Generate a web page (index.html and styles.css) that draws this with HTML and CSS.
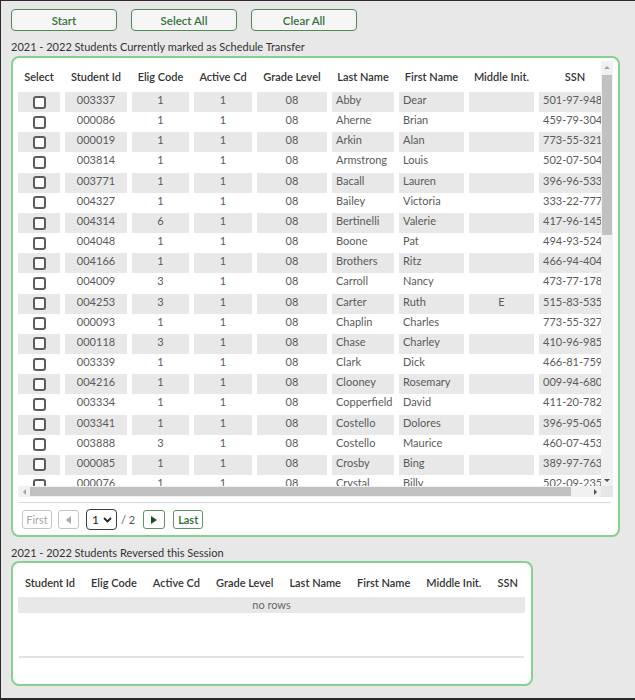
FILE: index.html
```html
<!DOCTYPE html>
<html>
<head>
<meta charset="utf-8">
<link rel="stylesheet" href="styles.css">
</head>
<body>
<div class="frame">
  <div class="actions">
    <button class="btn">Start</button>
    <button class="btn">Select All</button>
    <button class="btn">Clear All</button>
  </div>

  <div class="section-title">2021 - 2022 Students Currently marked as Schedule Transfer</div>
  <div class="panel panel-main">
    <div class="scroller">
      <div class="viewport">
        <div class="row head">
          <span class="h">Select</span><span class="h">Student Id</span><span class="h">Elig Code</span><span class="h">Active Cd</span><span class="h">Grade Level</span><span class="h">Last Name</span><span class="h">First Name</span><span class="h">Middle Init.</span><span class="h">SSN</span>
        </div>
        <div class="row alt"><span class="c ck"><span class="cb"></span></span><span class="c">003337</span><span class="c">1</span><span class="c">1</span><span class="c">08</span><span class="c l">Abby</span><span class="c l">Dear</span><span class="c"></span><span class="c l">501-97-9481</span></div>
        <div class="row"><span class="c ck"><span class="cb"></span></span><span class="c">000086</span><span class="c">1</span><span class="c">1</span><span class="c">08</span><span class="c l">Aherne</span><span class="c l">Brian</span><span class="c"></span><span class="c l">459-79-3042</span></div>
        <div class="row alt"><span class="c ck"><span class="cb"></span></span><span class="c">000019</span><span class="c">1</span><span class="c">1</span><span class="c">08</span><span class="c l">Arkin</span><span class="c l">Alan</span><span class="c"></span><span class="c l">773-55-3217</span></div>
        <div class="row"><span class="c ck"><span class="cb"></span></span><span class="c">003814</span><span class="c">1</span><span class="c">1</span><span class="c">08</span><span class="c l">Armstrong</span><span class="c l">Louis</span><span class="c"></span><span class="c l">502-07-5043</span></div>
        <div class="row alt"><span class="c ck"><span class="cb"></span></span><span class="c">003771</span><span class="c">1</span><span class="c">1</span><span class="c">08</span><span class="c l">Bacall</span><span class="c l">Lauren</span><span class="c"></span><span class="c l">396-96-5331</span></div>
        <div class="row"><span class="c ck"><span class="cb"></span></span><span class="c">004327</span><span class="c">1</span><span class="c">1</span><span class="c">08</span><span class="c l">Bailey</span><span class="c l">Victoria</span><span class="c"></span><span class="c l">333-22-7770</span></div>
        <div class="row alt"><span class="c ck"><span class="cb"></span></span><span class="c">004314</span><span class="c">6</span><span class="c">1</span><span class="c">08</span><span class="c l">Bertinelli</span><span class="c l">Valerie</span><span class="c"></span><span class="c l">417-96-1456</span></div>
        <div class="row"><span class="c ck"><span class="cb"></span></span><span class="c">004048</span><span class="c">1</span><span class="c">1</span><span class="c">08</span><span class="c l">Boone</span><span class="c l">Pat</span><span class="c"></span><span class="c l">494-93-5248</span></div>
        <div class="row alt"><span class="c ck"><span class="cb"></span></span><span class="c">004166</span><span class="c">1</span><span class="c">1</span><span class="c">08</span><span class="c l">Brothers</span><span class="c l">Ritz</span><span class="c"></span><span class="c l">466-94-4047</span></div>
        <div class="row"><span class="c ck"><span class="cb"></span></span><span class="c">004009</span><span class="c">3</span><span class="c">1</span><span class="c">08</span><span class="c l">Carroll</span><span class="c l">Nancy</span><span class="c"></span><span class="c l">473-77-1789</span></div>
        <div class="row alt"><span class="c ck"><span class="cb"></span></span><span class="c">004253</span><span class="c">3</span><span class="c">1</span><span class="c">08</span><span class="c l">Carter</span><span class="c l">Ruth</span><span class="c">E</span><span class="c l">515-83-5356</span></div>
        <div class="row"><span class="c ck"><span class="cb"></span></span><span class="c">000093</span><span class="c">1</span><span class="c">1</span><span class="c">08</span><span class="c l">Chaplin</span><span class="c l">Charles</span><span class="c"></span><span class="c l">773-55-3274</span></div>
        <div class="row alt"><span class="c ck"><span class="cb"></span></span><span class="c">000118</span><span class="c">3</span><span class="c">1</span><span class="c">08</span><span class="c l">Chase</span><span class="c l">Charley</span><span class="c"></span><span class="c l">410-96-9857</span></div>
        <div class="row"><span class="c ck"><span class="cb"></span></span><span class="c">003339</span><span class="c">1</span><span class="c">1</span><span class="c">08</span><span class="c l">Clark</span><span class="c l">Dick</span><span class="c"></span><span class="c l">466-81-7591</span></div>
        <div class="row alt"><span class="c ck"><span class="cb"></span></span><span class="c">004216</span><span class="c">1</span><span class="c">1</span><span class="c">08</span><span class="c l">Clooney</span><span class="c l">Rosemary</span><span class="c"></span><span class="c l">009-94-6801</span></div>
        <div class="row"><span class="c ck"><span class="cb"></span></span><span class="c">003334</span><span class="c">1</span><span class="c">1</span><span class="c">08</span><span class="c l">Copperfield</span><span class="c l">David</span><span class="c"></span><span class="c l">411-20-7823</span></div>
        <div class="row alt"><span class="c ck"><span class="cb"></span></span><span class="c">003341</span><span class="c">1</span><span class="c">1</span><span class="c">08</span><span class="c l">Costello</span><span class="c l">Dolores</span><span class="c"></span><span class="c l">396-95-0654</span></div>
        <div class="row"><span class="c ck"><span class="cb"></span></span><span class="c">003888</span><span class="c">3</span><span class="c">1</span><span class="c">08</span><span class="c l">Costello</span><span class="c l">Maurice</span><span class="c"></span><span class="c l">460-07-4532</span></div>
        <div class="row alt"><span class="c ck"><span class="cb"></span></span><span class="c">000085</span><span class="c">1</span><span class="c">1</span><span class="c">08</span><span class="c l">Crosby</span><span class="c l">Bing</span><span class="c"></span><span class="c l">389-97-7635</span></div>
        <div class="row"><span class="c ck"><span class="cb"></span></span><span class="c">000076</span><span class="c">1</span><span class="c">1</span><span class="c">08</span><span class="c l">Crystal</span><span class="c l">Billy</span><span class="c"></span><span class="c l">502-09-2357</span></div>
      </div>
      <div class="vscroll">
        <span class="arrow-box"><span class="tri-up dim"></span></span>
        <span class="vtrack"><span class="vthumb"></span></span>
        <span class="arrow-box"><span class="tri-down"></span></span>
      </div>
      <div class="hscroll">
        <span class="arrow-box"><span class="tri-left dim"></span></span>
        <span class="htrack"><span class="hthumb"></span></span>
        <span class="arrow-box"><span class="tri-right"></span></span>
      </div>
      <div class="corner"></div>
    </div>
    <div class="divider"></div>
    <div class="pager">
      <span class="pbtn disabled first">First</span>
      <span class="pbtn disabled icon"><span class="ptri-left"></span></span>
      <span class="pselect">1<svg class="chev" width="9" height="6" viewBox="0 0 9 6"><path d="M1 1 L4.5 4.5 L8 1" fill="none" stroke="#222" stroke-width="1.8"/></svg></span>
      <span class="ptotal">/ 2</span>
      <span class="pbtn active icon"><span class="ptri-right"></span></span>
      <span class="pbtn active last">Last</span>
    </div>
  </div>

  <div class="section-title second">2021 - 2022 Students Reversed this Session</div>
  <div class="panel panel-rev">
    <div class="rev-head">
      <span>Student Id</span><span>Elig Code</span><span>Active Cd</span><span>Grade Level</span><span>Last Name</span><span>First Name</span><span>Middle Init.</span><span>SSN</span>
    </div>
    <div class="no-rows">no rows</div>
    <div class="rev-body"></div>
    <div class="rev-line"></div>
  </div>
</div>
</body>
</html>
```

FILE: styles.css
```css
* { box-sizing: border-box; }
html, body { margin: 0; padding: 0; }
body {
  font-family: Lato, "Noto Sans", sans-serif;
  font-size: 11px;
  color: #333;
  background: #e8e8e8;
}
.frame {
  height: 700px;
  border-top: 1px solid #2b2b2b;
  border-left: 1px solid #2b2b2b;
  border-bottom: 2px solid #2b2b2b;
  padding: 8px 0 0 10px;
  background: #e8e8e8;
}
.actions { display: flex; gap: 14px; }
.btn {
  width: 106px;
  height: 22px;
  padding: 0;
  border: 1px solid #4f8a55;
  border-radius: 4px;
  background: #f6f6f6;
  color: #37703d;
  font: 600 11.5px Lato, "Noto Sans", sans-serif;
}
.section-title {
  margin-top: 9px;
  line-height: 14px;
  font-size: 11px;
  color: #333;
}
.panel {
  background: #fff;
  border: 2px solid #86d18d;
  border-radius: 8px;
}
.panel-main {
  margin-top: 2px;
  width: 609px;
  padding: 3px 5px 5px 5px;
}

/* scroll area */
.scroller {
  display: grid;
  grid-template-columns: 583px 12px;
  grid-template-rows: 425px 11px;
}
.viewport { overflow: hidden; }
.row {
  display: grid;
  grid-template-columns: 42px 62px 57px 58px 70px 62px 65px 65px 72px;
  column-gap: 5px;
  width: max-content;
  height: 20.17px;
}
.row.head { height: 31px; align-items: center; }
.h {
  text-align: center;
  font-weight: 600;
  color: #333;
  white-space: nowrap;
}
.c {
  text-align: center;
  line-height: 15px;
  color: #5a5a5a;
  white-space: nowrap;
  overflow: hidden;
}
.c.l { text-align: left; padding-left: 4px; }
.alt .c { background: #e8e8e8; }
.c.ck { display: flex; align-items: center; justify-content: center; }
.cb {
  width: 13px;
  height: 13px;
  border: 2px solid #5c5c5c;
  border-radius: 3px;
  background: #fff;
}

.vscroll {
  display: flex;
  flex-direction: column;
  background: #f1f1f1;
}
.hscroll {
  display: flex;
  background: #f1f1f1;
}
.corner { background: #e6e6e6; }
.arrow-box {
  width: 12px;
  height: 12px;
  flex: none;
  display: flex;
  align-items: center;
  justify-content: center;
}
.hscroll .arrow-box { height: 11px; }
.vtrack { flex: 1; padding: 2px 1px 0 1px; }
.vthumb { display: block; height: 160px; background: #c1c1c1; }
.htrack { flex: 1; padding: 1px 0; }
.hthumb { display: block; width: 541px; height: 9px; background: #c1c1c1; }
.tri-up, .tri-down, .tri-left, .tri-right { width: 0; height: 0; }
.tri-up { border-left: 3px solid transparent; border-right: 3px solid transparent; border-bottom: 3px solid #505050; }
.tri-down { border-left: 3px solid transparent; border-right: 3px solid transparent; border-top: 3px solid #505050; }
.tri-left { border-top: 3px solid transparent; border-bottom: 3px solid transparent; border-right: 3px solid #505050; }
.tri-right { border-top: 3px solid transparent; border-bottom: 3px solid transparent; border-left: 3px solid #505050; }
.tri-up.dim { border-bottom-color: #a3a3a3; }
.tri-left.dim { border-right-color: #a3a3a3; }

.divider {
  margin: 5px 1px 0 1px;
  width: 592px;
  height: 1px;
  background: #d3d9e0;
}

/* pager */
.pager {
  margin-top: 6px;
  height: 21px;
  padding-left: 4px;
  display: flex;
  align-items: center;
}
.pbtn {
  height: 19px;
  border: 1px solid #c4c4c4;
  border-radius: 3px;
  background: #fff;
  display: flex;
  align-items: center;
  justify-content: center;
  font-size: 11px;
}
.pbtn.first { width: 30px; color: #a8a8a8; }
.pbtn.icon { width: 21px; margin-left: 6px; }
.pbtn.active { border-color: #5c9561; }
.pbtn.active.icon { width: 22px; margin-left: 8px; }
.pbtn.last { width: 30px; margin-left: 8px; color: #2d6a33; font-weight: 600; }
.ptri-left { width: 0; height: 0; border-top: 4px solid transparent; border-bottom: 4px solid transparent; border-right: 5px solid #a8a8a8; }
.ptri-right { width: 0; height: 0; border-top: 4.5px solid transparent; border-bottom: 4.5px solid transparent; border-left: 6px solid #1f4d24; }
.pselect {
  margin-left: 7px;
  width: 31px;
  height: 21px;
  border: 1.5px solid #3a3a3a;
  border-radius: 4px;
  background: #fff;
  display: flex;
  align-items: center;
  padding-left: 5px;
  gap: 4px;
  font-size: 12px;
  color: #222;
}
.chev { display: block; }
.ptotal { margin-left: 4px; color: #555; font-size: 11px; }

/* second panel */
.section-title.second { margin-top: 9px; }
.panel-rev {
  margin-top: 1px;
  width: 522px;
  padding: 4px 6px 26px 5px;
}
.rev-head {
  height: 30px;
  display: flex;
  align-items: center;
  justify-content: space-between;
  padding: 0 7px;
  font-weight: 600;
  color: #333;
  white-space: nowrap;
}
.no-rows {
  height: 16px;
  line-height: 16px;
  background: #e8e8e8;
  text-align: center;
  color: #666;
}
.rev-body { height: 43px; }
.rev-line { height: 2px; margin: 0 1px; background: #dfe2e6; }
```
